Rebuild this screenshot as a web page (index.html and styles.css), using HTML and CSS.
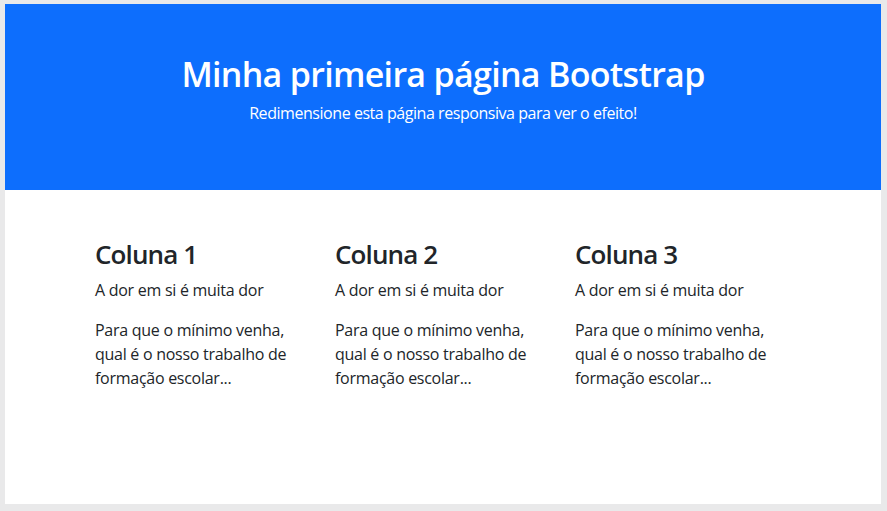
FILE: index.html
```html
<!DOCTYPE html>
<html lang="pt">
<head>
<meta charset="utf-8">
<title>Minha primeira página Bootstrap</title>
<link rel="stylesheet" href="styles.css">
</head>
<body>
<div class="page">
  <header class="hero">
    <h1 class="hero-title">Minha primeira página Bootstrap</h1>
    <p class="hero-sub">Redimensione esta página responsiva para ver o efeito!</p>
  </header>
  <main class="container">
    <div class="row">
      <section class="col">
        <h2 class="col-title">Coluna 1</h2>
        <p class="col-text">A dor em si é muita dor</p>
        <p class="col-text">Para que o mínimo venha, qual é o nosso trabalho de formação escolar...</p>
      </section>
      <section class="col">
        <h2 class="col-title">Coluna 2</h2>
        <p class="col-text">A dor em si é muita dor</p>
        <p class="col-text">Para que o mínimo venha, qual é o nosso trabalho de formação escolar...</p>
      </section>
      <section class="col">
        <h2 class="col-title">Coluna 3</h2>
        <p class="col-text">A dor em si é muita dor</p>
        <p class="col-text">Para que o mínimo venha, qual é o nosso trabalho de formação escolar...</p>
      </section>
    </div>
  </main>
</div>
</body>
</html>
```
FILE: styles.css
```css
html, body {
  margin: 0;
  padding: 0;
}
body {
  background: #e9e9ea;
  padding: 4px 6px 7px 5px;
  height: 511px;
  box-sizing: border-box;
  font-family: "Open Sans", "Noto Sans", sans-serif;
  color: #212529;
}
.page {
  background: #ffffff;
  height: 500px;
  overflow: hidden;
}
.hero {
  background: #0d6efd;
  color: #ffffff;
  text-align: center;
  padding: 50px 48px 48px;
  height: 186px;
  box-sizing: border-box;
}
.hero-title {
  margin: 0 0 6px;
  font-size: 34px;
  font-weight: 600;
  line-height: 41px;
  letter-spacing: -0.7px;
}
.hero-sub {
  margin: 0;
  font-size: 16px;
  line-height: 24px;
  letter-spacing: -0.45px;
}
.container {
  width: 720px;
  margin: 48px auto 0;
  padding: 0 12px;
  box-sizing: border-box;
}
.row {
  display: flex;
  margin: 0 -12px;
}
.col {
  flex: 0 0 240px;
  padding: 0 12px;
  box-sizing: border-box;
}
.col-title {
  margin: 0 0 7px;
  font-size: 26px;
  font-weight: 600;
  line-height: 33px;
  letter-spacing: -0.9px;
}
.col-text {
  margin: 0 0 16px;
  font-size: 16px;
  line-height: 24px;
  letter-spacing: -0.27px;
}
```
